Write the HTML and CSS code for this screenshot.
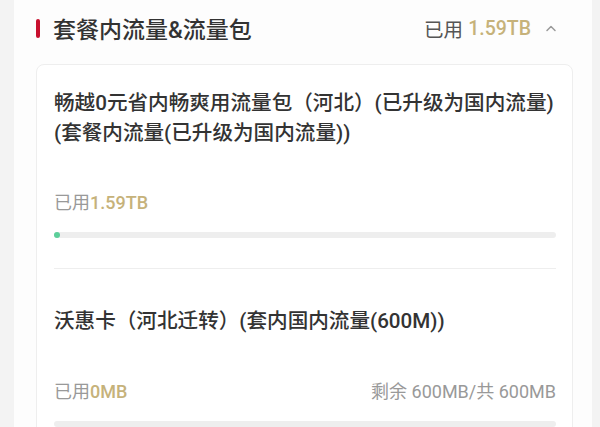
FILE: index.html
```html
<!DOCTYPE html>
<html lang="zh-CN">
<head>
  <meta charset="UTF-8">
  <meta name="viewport" content="width=device-width, initial-scale=1.0">
  <title>套餐内流量&amp;流量包</title>
  <link rel="stylesheet" href="styles.css">
</head>
<body>
  <div class="page">
    <div class="panel">
      <div class="section-head">
        <div class="head-title">
          <span class="mark"></span>
          <span>套餐内流量&amp;流量包</span>
        </div>
        <div class="head-used">
          已用 <span class="gold">1.59TB</span>
          <svg class="chevron" width="12" height="8" viewBox="0 0 12 8">
            <polyline points="2,6.5 6,2.5 10,6.5" fill="none" stroke="#999" stroke-width="1.5" stroke-linecap="round" stroke-linejoin="round"/>
          </svg>
        </div>
      </div>

      <div class="card">
        <div class="item">
          <div class="item-title">畅越0元省内畅爽用流量包（河北）(已升级为国内流量)(套餐内流量(已升级为国内流量))</div>
          <div class="item-usage">
            <span>已用<span class="gold">1.59TB</span></span>
          </div>
          <div class="bar"><div class="bar-fill" style="width: 1%"></div></div>
        </div>
        <div class="item">
          <div class="item-title">沃惠卡（河北迁转）(套内国内流量(600M))</div>
          <div class="item-usage">
            <span>已用<span class="gold">0MB</span></span>
            <span>剩余 600MB/共 600MB</span>
          </div>
          <div class="bar"><div class="bar-fill" style="width: 0%"></div></div>
        </div>
      </div>
    </div>
  </div>
</body>
</html>
```

FILE: styles.css
```css
body {
  margin: 0;
  font-family: Roboto, "Noto Sans CJK SC", sans-serif;
  background: #f3f3f3;
  color: #333;
}
.page {
  height: 427px;
  overflow: hidden;
  padding: 0 8px 0 14px;
}
.panel {
  background: #fdfdfd;
  height: 100%;
  padding: 0 19px 0 22px;
}
.section-head {
  display: flex;
  justify-content: space-between;
  align-items: center;
  height: 56px;
}
.head-title {
  display: flex;
  align-items: center;
  gap: 13px;
  font-size: 23px;
  font-weight: 500;
  color: #333;
}
.mark {
  width: 4px;
  height: 19px;
  border-radius: 2px;
  background: #c8102e;
}
.head-used {
  display: flex;
  align-items: center;
  gap: 5px;
  font-size: 19.5px;
  color: #555;
  margin-right: 16px;
}
.gold {
  color: #c6b27a;
  font-weight: 500;
}
.chevron {
  margin-left: 9px;
}
.card {
  margin-top: 8px;
  border: 1px solid #eeeeee;
  border-radius: 8px;
  padding: 0 16px 0 17px;
  background: #fff;
}
.item {
  padding: 23px 0 30px;
  border-bottom: 1px solid #eeeeee;
}
.item + .item {
  padding-top: 37px;
}
.item-title {
  font-size: 20.6px;
  line-height: 30px;
  font-weight: 500;
  color: #333;
}
.item-usage {
  display: flex;
  justify-content: space-between;
  margin-top: 43px;
  font-size: 18px;
  line-height: 24px;
  color: #999;
}
.item + .item .item-usage {
  margin-top: 44px;
}
.bar {
  margin-top: 17px;
  height: 6px;
  border-radius: 3px;
  background: #eeeeee;
}
.bar-fill {
  height: 100%;
  min-width: 6px;
  border-radius: 3px;
  background: #5ccf9a;
}
.item + .item .bar-fill {
  min-width: 0;
}
```
